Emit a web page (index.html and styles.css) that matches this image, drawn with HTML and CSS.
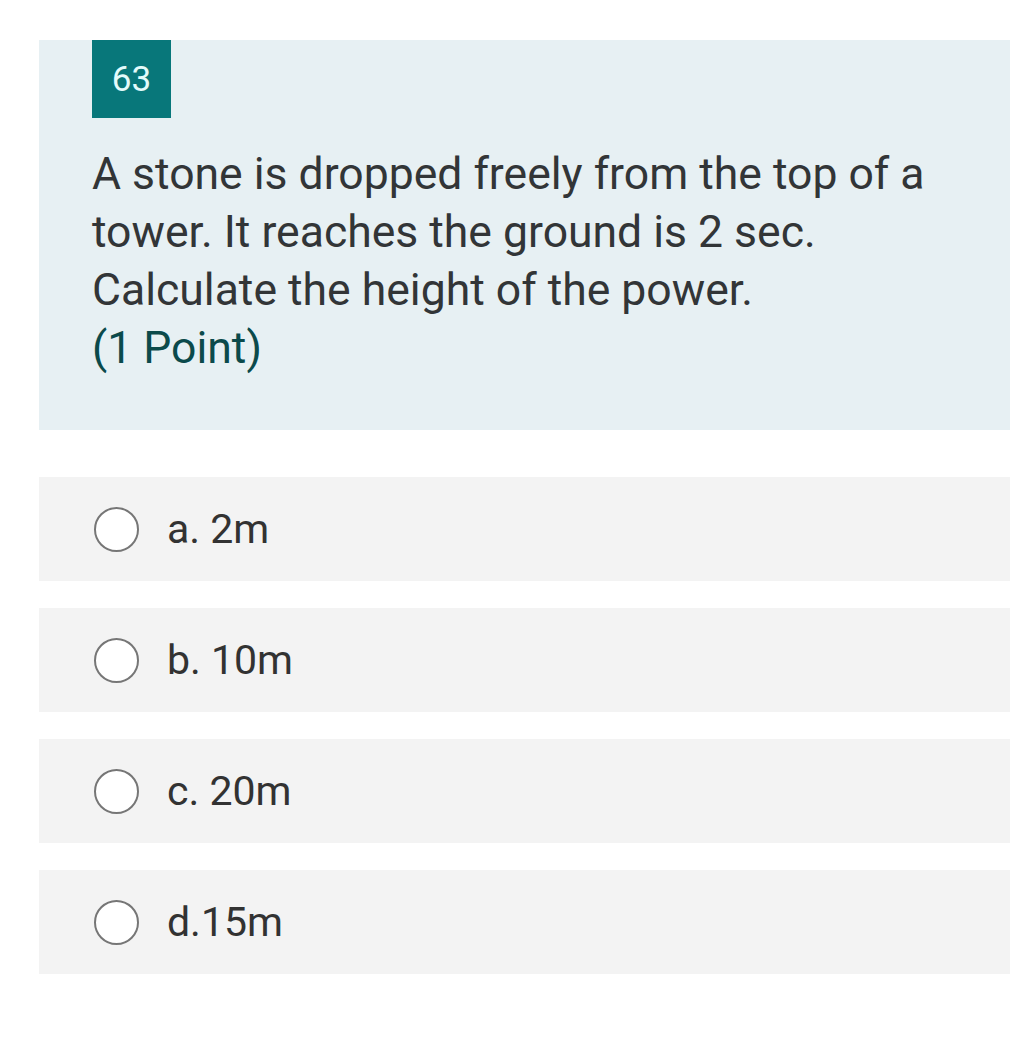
FILE: index.html
```html
<!DOCTYPE html>
<html>
<head>
<meta charset="utf-8">
<link rel="stylesheet" href="styles.css">
</head>
<body>
<div class="page">
  <section class="question-card">
    <div class="badge">63</div>
    <p class="question-text">A stone is dropped freely from the top of a tower. It reaches the ground is 2 sec. Calculate the height of the power.<br><span class="points">(1 Point)</span></p>
  </section>
  <div class="options">
    <label class="option"><span class="radio"></span><span class="option-text">a. 2m</span></label>
    <label class="option"><span class="radio"></span><span class="option-text">b. 10m</span></label>
    <label class="option"><span class="radio"></span><span class="option-text">c. 20m</span></label>
    <label class="option"><span class="radio"></span><span class="option-text">d.15m</span></label>
  </div>
</div>
</body>
</html>
```
FILE: styles.css
```css
html, body {
  margin: 0;
  padding: 0;
  background: #ffffff;
}
body {
  font-family: Roboto, "Noto Sans", "Liberation Sans", sans-serif;
  color: #323232;
}
.page {
  padding: 40px 0 0 39px;
}
.question-card {
  background: #e7f0f3;
  padding: 0 40px 53px 53px;
}
.badge {
  width: 79px;
  height: 78px;
  background: #08777a;
  color: #e3fbfb;
  font-size: 35px;
  display: flex;
  align-items: center;
  justify-content: center;
}
.question-text {
  margin: 27px 0 0 0;
  font-size: 44.5px;
  line-height: 58px;
  color: #323537;
}
.points {
  color: #0b4a4b;
}
.options {
  margin-top: 47px;
  display: flex;
  flex-direction: column;
  gap: 27px;
}
.option {
  height: 104px;
  background: #f3f3f3;
  display: flex;
  align-items: center;
  padding-left: 55px;
}
.radio {
  width: 41px;
  height: 41px;
  border: 2px solid #767676;
  border-radius: 50%;
  background: #ffffff;
  flex: none;
}
.option-text {
  margin-left: 28px;
  font-size: 41px;
  color: #323232;
}
```
